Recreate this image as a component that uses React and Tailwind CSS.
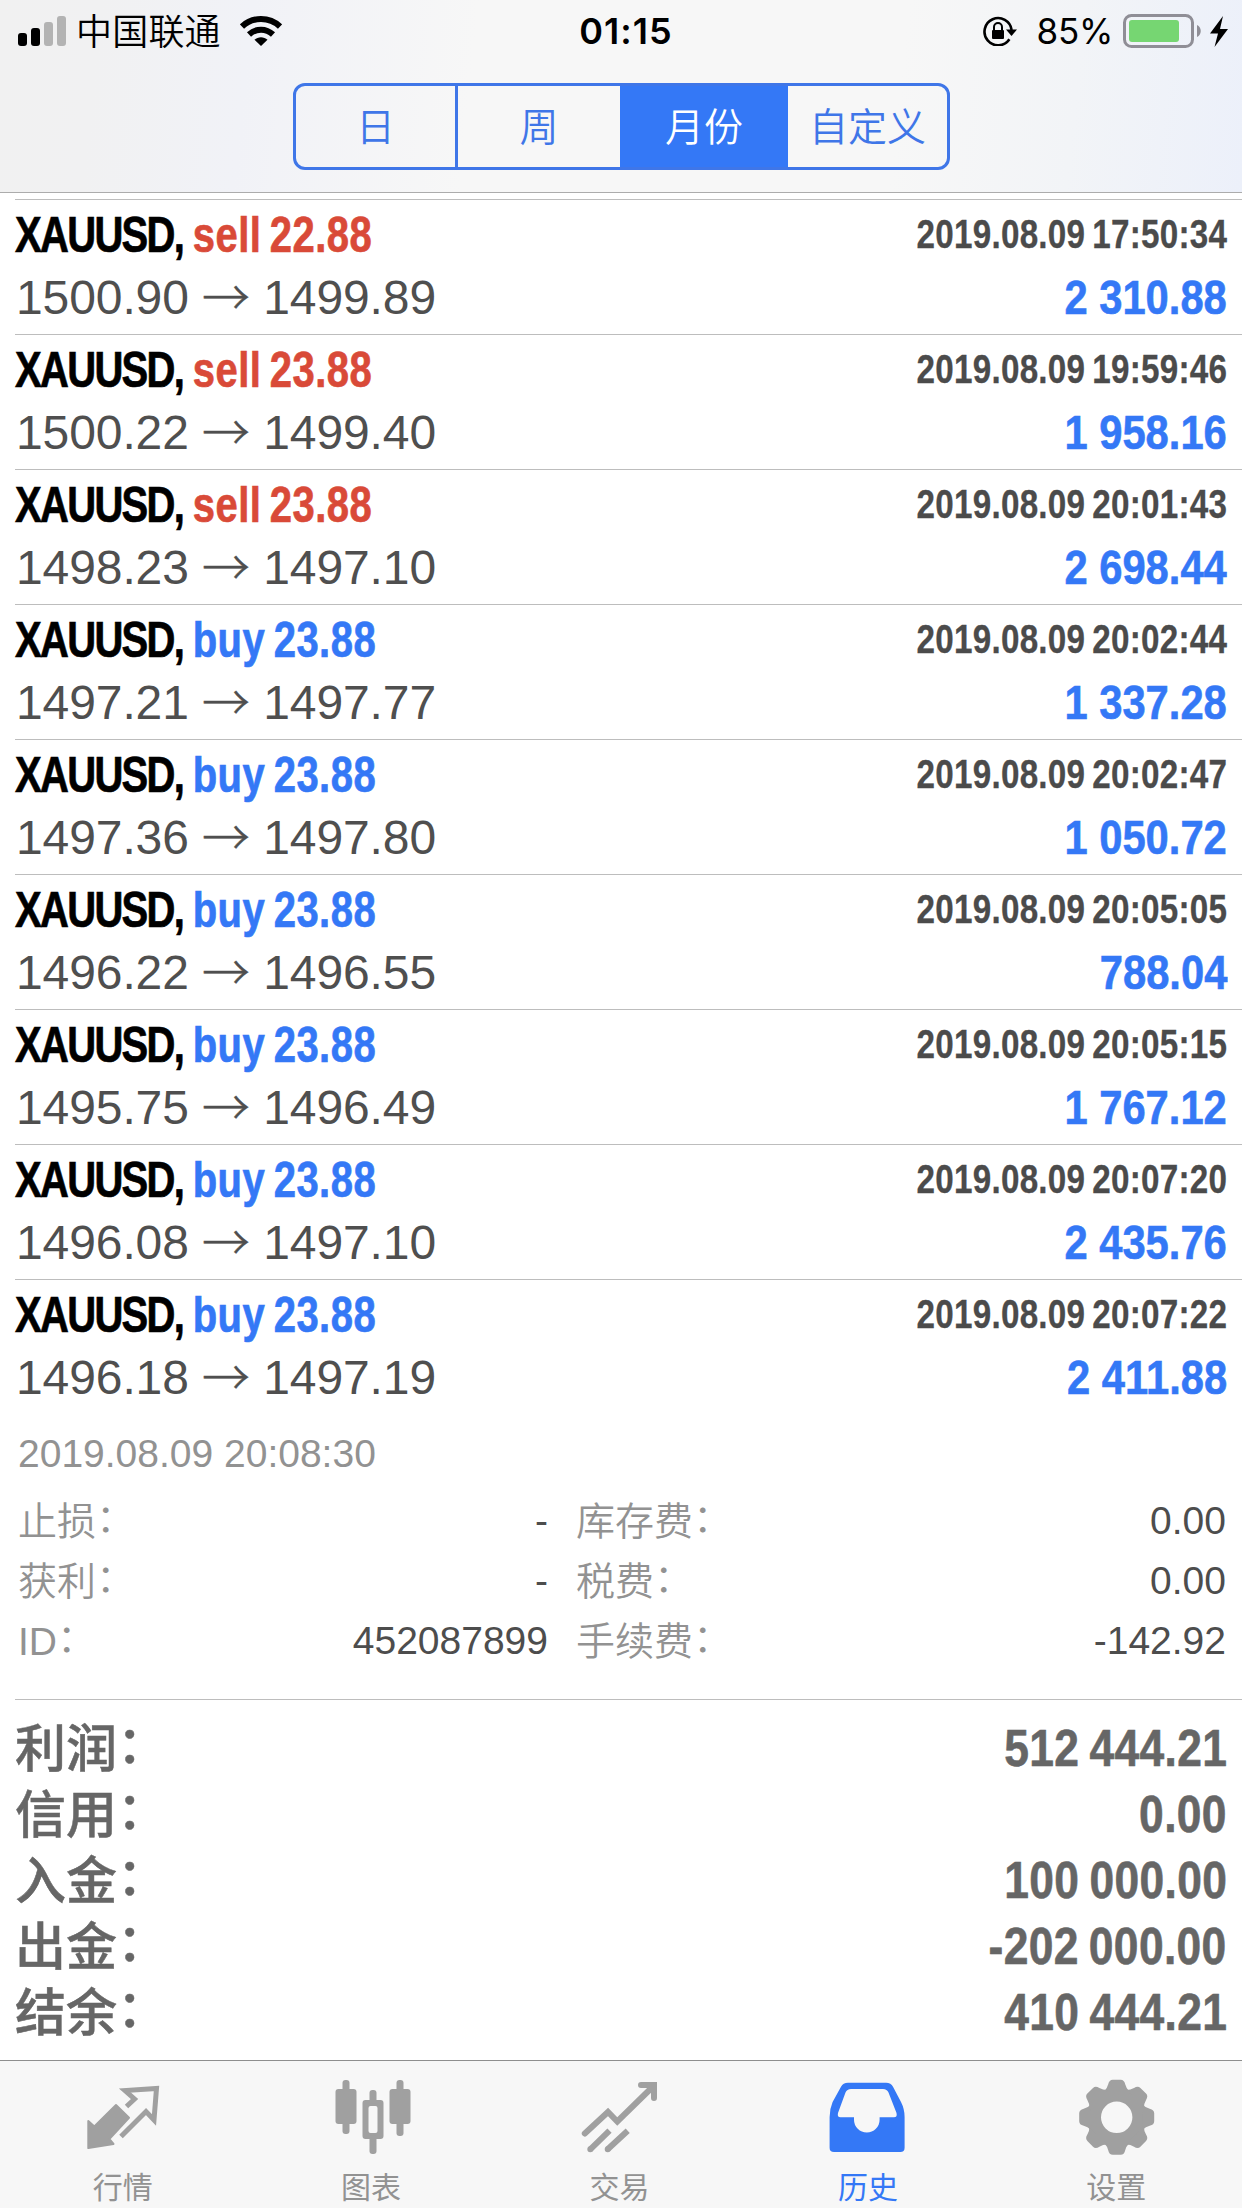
import React, { useState } from "react";

const deals = [
  { type: "sell", lots: "22.88", open: "1500.90", close: "1499.89", time: "2019.08.09 17:50:34", profit: "2 310.88" },
  { type: "sell", lots: "23.88", open: "1500.22", close: "1499.40", time: "2019.08.09 19:59:46", profit: "1 958.16" },
  { type: "sell", lots: "23.88", open: "1498.23", close: "1497.10", time: "2019.08.09 20:01:43", profit: "2 698.44" },
  { type: "buy", lots: "23.88", open: "1497.21", close: "1497.77", time: "2019.08.09 20:02:44", profit: "1 337.28" },
  { type: "buy", lots: "23.88", open: "1497.36", close: "1497.80", time: "2019.08.09 20:02:47", profit: "1 050.72" },
  { type: "buy", lots: "23.88", open: "1496.22", close: "1496.55", time: "2019.08.09 20:05:05", profit: "788.04" },
  { type: "buy", lots: "23.88", open: "1495.75", close: "1496.49", time: "2019.08.09 20:05:15", profit: "1 767.12" },
  { type: "buy", lots: "23.88", open: "1496.08", close: "1497.10", time: "2019.08.09 20:07:20", profit: "2 435.76" },
  { type: "buy", lots: "23.88", open: "1496.18", close: "1497.19", time: "2019.08.09 20:07:22", profit: "2 411.88" },
];

const details = [
  ["止损", "-", "库存费", "0.00"],
  ["获利", "-", "税费", "0.00"],
  ["ID", "452087899", "手续费", "-142.92"],
];

const summary = [
  ["利润", "512 444.21"],
  ["信用", "0.00"],
  ["入金", "100 000.00"],
  ["出金", "-202 000.00"],
  ["结余", "410 444.21"],
];

const periods = [
  { label: "日", width: "w-[159px]" },
  { label: "周", width: "w-[165px] border-l-[3px] border-[#3f76e8]" },
  { label: "月份", width: "w-[168px]" },
  { label: "自定义", width: "w-[159px]" },
];

const StatusBar = () => (
  <div className="flex h-[62px] items-center text-black">
    <div className="flex flex-1 items-center pl-[18px]">
      <svg width="48" height="30" viewBox="0 0 48 30">
        <rect x="0" y="17" width="9" height="13" rx="3" />
        <rect x="13" y="12" width="9" height="18" rx="3" />
        <rect x="26" y="6" width="9" height="24" rx="3" fill="#b3b3b3" />
        <rect x="39" y="0" width="9" height="30" rx="3" fill="#b3b3b3" />
      </svg>
      <span className="ml-[10px] pt-[3px] font-['Liberation_Sans','Noto_Sans_CJK_SC',sans-serif] text-[36px] leading-[59px] font-[350] tracking-[0.2px]">
        中国联通
      </span>
      <svg className="ml-[19px]" width="42" height="30" viewBox="0 0 42 30" fill="none" stroke="#000" strokeWidth="6">
        <path d="M2 10.5C12.5 0.5 29.5 0.5 40 10.5" />
        <path d="M9 18.5C16 12 26 12 33 18.5" />
        <path d="M21 30L14.5 23.8C18 20.3 24 20.3 27.5 23.8Z" fill="#000" stroke="none" />
      </svg>
    </div>
    <span className="pl-[6px] font-['Inter',sans-serif] text-[36px] font-semibold tracking-[1px]">01:15</span>
    <div className="flex flex-1 items-center justify-end pr-[14px]">
      <svg width="34" height="30" viewBox="0 0 34 30" fill="none" stroke="#000" strokeWidth="2.6">
        <path d="M26.4 23.3A13.6 13.6 0 1 1 28.6 14" />
        <path d="M23 13.5H34L28.5 20Z" fill="#000" stroke="none" />
        <rect x="9" y="14" width="12" height="9" rx="1" fill="#000" stroke="none" />
        <path d="M11 14.5V11a4 4 0 0 1 8 0V14.5" strokeWidth="2" />
      </svg>
      <span className="ml-[20px] font-['Inter',sans-serif] text-[35px] tracking-[-0.3px]">85%</span>
      <svg className="ml-[10px]" width="79" height="34" viewBox="0 0 79 34">
        <rect x="1.5" y="1.5" width="68" height="31" rx="7" fill="none" stroke="#8f8e96" strokeWidth="3" />
        <rect x="6" y="6" width="50" height="22" rx="3" fill="#76d672" />
        <path d="M74 11C79 13 79 21 74 23Z" fill="#8f8e96" />
      </svg>
      <svg className="ml-[8px]" width="18" height="31" viewBox="0 0 18 31">
        <path d="M13 0L0 17.5H8L4.5 31L18 13H10Z" />
      </svg>
    </div>
  </div>
);

const Deal = ({ deal }) => (
  <div className="ml-[15px] h-[135px] border-t border-[#bdbdbd] pt-[2px] pr-[15px] font-['Liberation_Sans',sans-serif]">
    <div className="flex justify-between leading-[64px] font-bold">
      <div className="h-[64px] origin-left scale-x-[0.8] pt-px text-[50px] whitespace-pre [-webkit-text-stroke:0.7px]">
        <span className="tracking-[-2.1px] text-black">XAUUSD, </span>
        <span
          className={`tracking-[0.6px] [word-spacing:-4px] ${deal.type === "sell" ? "text-[#d94a38]" : "text-[#3478f6]"}`}
        >
          {deal.type} {deal.lots}
        </span>
      </div>
      <span className="origin-right scale-x-[0.83] text-[40px] tracking-[0.3px] text-[#4b4b4b] [-webkit-text-stroke:0.3px] [word-spacing:-3px]">
        {deal.time}
      </span>
    </div>
    <div className="flex justify-between leading-[64px]">
      <div className="pl-px text-[48px] tracking-[-0.1px] text-[#4f4f4f]">
        {deal.open}{" "}
        <span className="relative top-px font-['Noto_Sans_CJK_SC',sans-serif] leading-none font-light [-webkit-text-stroke:0.4px]">
          →
        </span>{" "}
        {deal.close}
      </div>
      <span className="h-[64px] origin-right scale-x-[0.86] text-[48.5px] leading-[63px] font-bold text-[#3478f6] [-webkit-text-stroke:0.6px]">
        {deal.profit}
      </span>
    </div>
  </div>
);

const DetailLabel = ({ text }) => (
  <span className="pt-[3px] font-[350]">
    {text}
    <span className="relative -top-[3px]">：</span>
  </span>
);

const QuotesIcon = () => (
  <>
    <path d="M40.5 30.5L48.5 23L39 14.5L70.5 12.5L68 44L60 35.5L35 60.5" fill="none" stroke="currentColor" strokeWidth="5" />
    <path
      d="M30 29L43 41.7L23.3 63L27.5 68L2.3 72L2.3 45L8.3 50.5Z"
      fill="currentColor"
      stroke="currentColor"
      strokeWidth="2"
      strokeLinejoin="round"
    />
  </>
);

const ChartIcon = () => (
  <g fill="currentColor">
    <rect x="0.5" y="13" width="21" height="35" rx="3" />
    <rect x="7.5" y="4" width="7" height="54" rx="3" />
    <path fillRule="evenodd" d="M30.5 24h15q3 0 3 3v33q0 3-3 3h-15q-3 0-3-3v-33q0-3 3-3ZM35.5 30q-2 0-2 2v23q0 2 2 2h5q2 0 2-2v-23q0-2-2-2Z" />
    <rect x="34.5" y="14" width="7" height="14" rx="3" />
    <rect x="34.5" y="59" width="7" height="19" rx="3" />
    <rect x="54.5" y="13" width="21" height="35" rx="3" />
    <rect x="61.5" y="4" width="7" height="56" rx="3" />
  </g>
);

const TradeIcon = () => (
  <g fill="none" stroke="currentColor" strokeWidth="6">
    <path d="M1.8 57.5L25 36L34.3 45.5L70 10.5" strokeLinecap="round" />
    <path d="M58 9H71V22" strokeLinecap="round" />
    <path d="M7.3 73.3L26.5 54.7M24.7 73.3L44.7 54.7" />
    <path d="M7.3 73.3h0.01M24.7 73.3h0.01" strokeLinecap="round" />
  </g>
);

const HistoryIcon = () => (
  <path
    fill="currentColor"
    fillRule="evenodd"
    d="M17 6.7H55q5 0 7 4L70 26Q73.6 33 73.6 41V71.7q0 4.3-4.3 4.3H3q-4.4 0-4.4-4.3V41Q-1.4 33 1.6 26L10 10.7Q12 6.7 17 6.7ZM20 13H52q4 0 5.5 3.5L65.5 37q1 4.3-2.5 4.3H48.6V43.7a12.8 12.8 0 0 1-25.6 0V41.3H9.5q-3.5 0-2.5-4.3L14.5 16.5Q16 13 20 13Z"
  />
);

const SettingsIcon = () => (
  <g fill="currentColor" transform="translate(36.7 41.3)">
    <circle r="22.5" fill="none" stroke="currentColor" strokeWidth="13.6" />
    {[0, 45, 90, 135, 180, 225, 270, 315].map((deg) => (
      <path key={deg} transform={`rotate(${deg})`} d="M-12.5 -26Q-9.5 -29 -8.5 -33Q-7.5 -37.5 -4 -37.5H4Q7.5 -37.5 8.5 -33Q9.5 -29 12.5 -26Z" />
    ))}
  </g>
);

const tabs = [
  { label: "行情", Icon: QuotesIcon },
  { label: "图表", Icon: ChartIcon },
  { label: "交易", Icon: TradeIcon },
  { label: "历史", Icon: HistoryIcon },
  { label: "设置", Icon: SettingsIcon },
];

const App = () => {
  const [period, setPeriod] = useState("月份");
  const [tab, setTab] = useState("历史");

  return (
    <div className="flex h-[2208px] w-[1242px] flex-col overflow-hidden bg-white">
      {/* Header */}
      <header className="h-[193px] shrink-0 border-b border-[#acacac] bg-[linear-gradient(96deg,#f1f1f1_0%,#f1f1f2_8%,#f1f2f7_20%,#f7f7f7_38%,#f7f7f7_72%,#f2f4f7_86%,#ecf0fa_100%)]">
        <StatusBar />
        <div className="mt-[21px] ml-[293px] flex h-[87px] w-[657px] overflow-hidden rounded-[12px] border-[3px] border-[#3f76e8]">
          {periods.map(({ label, width }) => (
            <button
              key={label}
              onClick={() => setPeriod(label)}
              className={`${width} pt-px font-['Liberation_Sans','Noto_Sans_CJK_SC',sans-serif] text-[39px] leading-[81px] font-[350] ${
                period === label ? "bg-[#3478f6] text-white" : "text-[#3f76e8]"
              }`}
            >
              {label}
            </button>
          ))}
        </div>
      </header>

      {/* Deals */}
      <main className="pt-[6px]">
        {deals.map((deal) => (
          <Deal key={deal.time} deal={deal} />
        ))}

        {/* Expanded info of the last deal */}
        <div className="h-[285px] pt-[10px] pr-[16px] pl-[18px] font-['Liberation_Sans','Noto_Sans_CJK_SC',sans-serif] text-[39px] text-[#929292]">
          <p className="leading-[60px]">2019.08.09 20:08:30</p>
          <div className="mt-[6px]">
            {details.map(([label, value, label2, value2]) => (
              <div key={label} className="flex h-[60px] items-center leading-[60px]">
                <DetailLabel text={label} />
                <span className="ml-auto pt-px text-[#4d4d4d]">{value}</span>
                <div className="ml-[28px] flex w-[650px] items-center justify-between">
                  <DetailLabel text={label2} />
                  <span className="pt-px text-[#4d4d4d]">{value2}</span>
                </div>
              </div>
            ))}
          </div>
        </div>

        {/* Totals */}
        <div className="ml-[15px] border-t border-[#bdbdbd] pt-[15px] pr-[15px] font-['Liberation_Sans','Noto_Sans_CJK_SC',sans-serif] text-[#666]">
          {summary.map(([label, value]) => (
            <div key={label} className="flex h-[66px] items-center justify-between leading-[66px]">
              <span className="pt-[4px] text-[51px] font-medium [-webkit-text-stroke:0.5px]">
                {label}
                <span className="relative -top-[4px]">：</span>
              </span>
              <span className="origin-right scale-x-[0.87] pt-[2px] text-[51px] font-bold tracking-[0.4px] [-webkit-text-stroke:0.6px] [word-spacing:-3px]">
                {value}
              </span>
            </div>
          ))}
        </div>
      </main>

      {/* Tab bar */}
      <nav className="mt-auto flex h-[148px] shrink-0 border-t border-[#8e8e8e] bg-[#f7f7f7] pt-[15px]">
        {tabs.map(({ label, Icon }) => (
          <button
            key={label}
            onClick={() => setTab(label)}
            className={`flex flex-1 flex-col items-center ${tab === label ? "text-[#3478f6]" : "text-[#a0a0a0]"}`}
          >
            <svg width="76" height="80" viewBox="0 0 76 80" className="overflow-visible">
              <Icon />
            </svg>
            <span
              className={`mt-[9px] mr-[3px] font-['Noto_Sans_CJK_SC',sans-serif] text-[30px] leading-[40px] ${
                tab === label ? "text-[#3478f6]" : "text-[#929292]"
              }`}
            >
              {label}
            </span>
          </button>
        ))}
      </nav>
    </div>
  );
};

export default App;
